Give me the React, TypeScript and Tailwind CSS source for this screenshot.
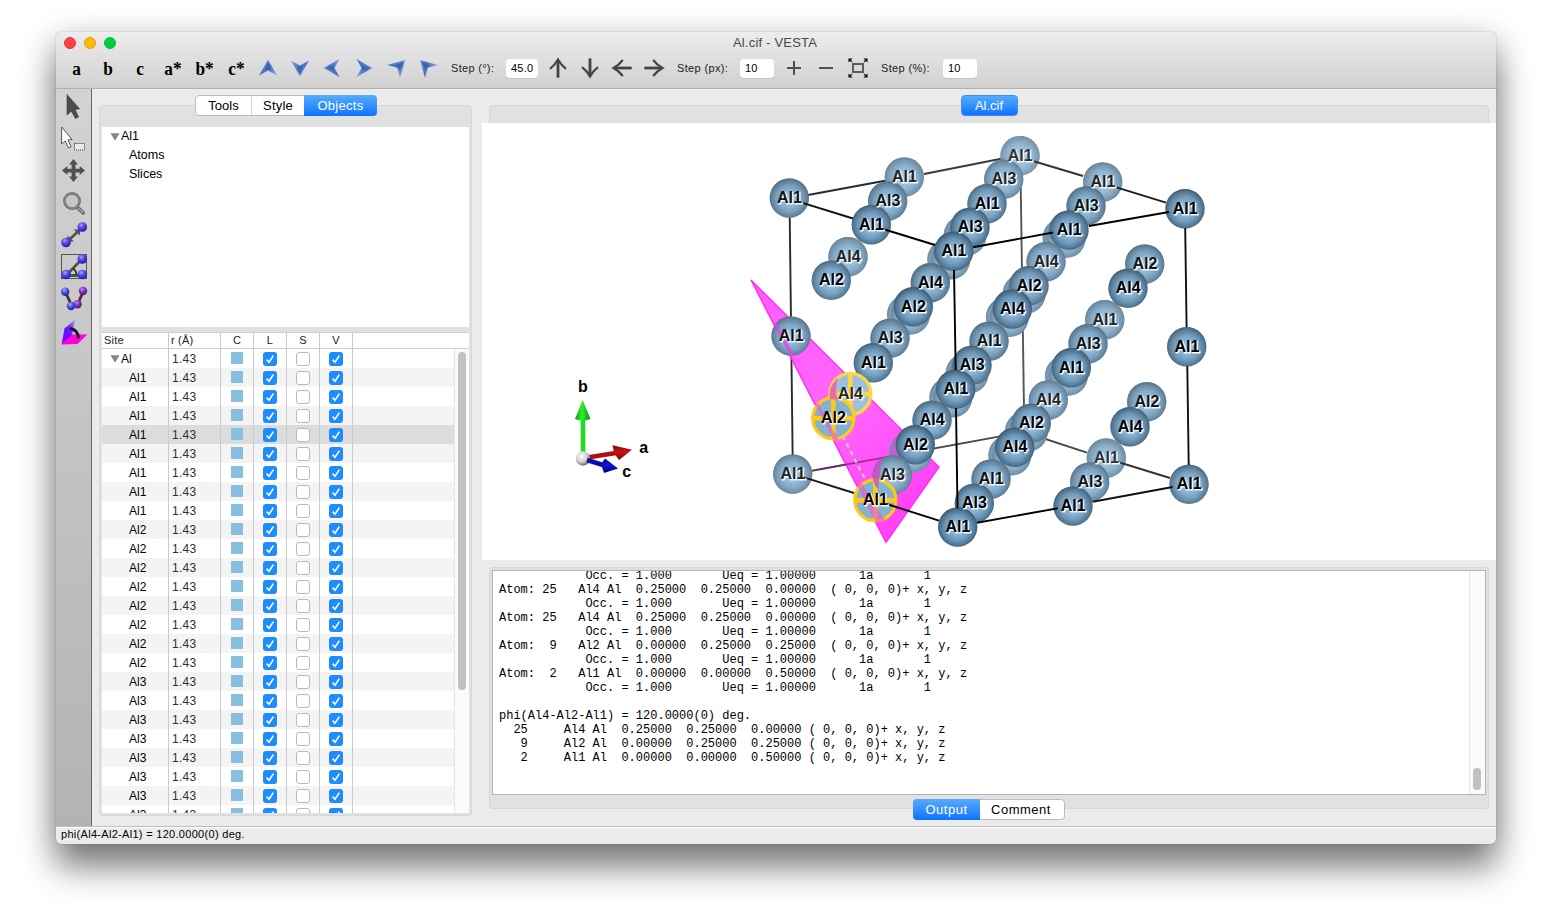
import React from "react";

const SANS = "font-['Liberation_Sans',Arial,sans-serif]";

type Atom = { x: number; y: number; label: string; fog: number; selected?: boolean };

const hiddenAtoms: [number, number][] = [
  [970, 227.3], [953.7, 251.3], [913.3, 306.7], [1069, 230], [1029, 285.7], [1012.3, 309],
  [972, 365.3], [955.7, 389.3], [915.3, 444.7], [1071.3, 367.7], [1031.3, 423.3], [1014.7, 447.3],
];

const atoms: Atom[] = [
  { x: 1020, y: 155.7, label: "Al1", fog: 0.26 },
  { x: 1003.7, y: 179.3, label: "Al3", fog: 0.18 },
  { x: 987, y: 203.7, label: "Al1", fog: 0.08 },
  { x: 970, y: 227.3, label: "Al3", fog: 0.03 },
  { x: 953.7, y: 251.3, label: "Al1", fog: 0 },
  { x: 904.3, y: 177, label: "Al1", fog: 0.2 },
  { x: 887.7, y: 201, label: "Al3", fog: 0.12 },
  { x: 871.3, y: 224.7, label: "Al1", fog: 0.04 },
  { x: 789.3, y: 198, label: "Al1", fog: 0.1 },
  { x: 848, y: 256.7, label: "Al4", fog: 0.2 },
  { x: 831.3, y: 280.3, label: "Al2", fog: 0.08 },
  { x: 1102.7, y: 182, label: "Al1", fog: 0.2 },
  { x: 1086, y: 206, label: "Al3", fog: 0.1 },
  { x: 1069, y: 230, label: "Al1", fog: 0.02 },
  { x: 1185, y: 208.7, label: "Al1", fog: 0.03 },
  { x: 1046, y: 261.7, label: "Al4", fog: 0.16 },
  { x: 1029, y: 285.7, label: "Al2", fog: 0.06 },
  { x: 1012.3, y: 309, label: "Al4", fog: 0 },
  { x: 930.3, y: 282.7, label: "Al4", fog: 0.08 },
  { x: 913.3, y: 306.7, label: "Al2", fog: 0 },
  { x: 1144.7, y: 264, label: "Al2", fog: 0.12 },
  { x: 1128, y: 288.3, label: "Al4", fog: 0.03 },
  { x: 890, y: 338.3, label: "Al3", fog: 0.12 },
  { x: 873.3, y: 362.7, label: "Al1", fog: 0.05 },
  { x: 791, y: 336, label: "Al1", fog: 0.12 },
  { x: 989, y: 341.3, label: "Al1", fog: 0.1 },
  { x: 972, y: 365.3, label: "Al3", fog: 0.04 },
  { x: 955.7, y: 389.3, label: "Al1", fog: 0 },
  { x: 1104.7, y: 319.7, label: "Al1", fog: 0.2 },
  { x: 1088, y: 343.7, label: "Al3", fog: 0.12 },
  { x: 1071.3, y: 367.7, label: "Al1", fog: 0.02 },
  { x: 1186.7, y: 346.7, label: "Al1", fog: 0.05 },
  { x: 1048.3, y: 400, label: "Al4", fog: 0.18 },
  { x: 1031.3, y: 423.3, label: "Al2", fog: 0.08 },
  { x: 1014.7, y: 447.3, label: "Al4", fog: 0 },
  { x: 932, y: 420.3, label: "Al4", fog: 0.08 },
  { x: 915.3, y: 444.7, label: "Al2", fog: 0 },
  { x: 1146.7, y: 401.7, label: "Al2", fog: 0.13 },
  { x: 1130, y: 426.7, label: "Al4", fog: 0.04 },
  { x: 850.3, y: 394, label: "Al4", fog: 0.2, selected: true },
  { x: 833.3, y: 418.3, label: "Al2", fog: 0.05, selected: true },
  { x: 792.7, y: 474, label: "Al1", fog: 0.18 },
  { x: 892.3, y: 475, label: "Al3", fog: 0.15 },
  { x: 875.3, y: 500.3, label: "Al1", fog: 0, selected: true },
  { x: 991, y: 479, label: "Al1", fog: 0.12 },
  { x: 974.3, y: 503.3, label: "Al3", fog: 0.05 },
  { x: 957.7, y: 527, label: "Al1", fog: 0 },
  { x: 1106.3, y: 458, label: "Al1", fog: 0.22 },
  { x: 1089.7, y: 482, label: "Al3", fog: 0.14 },
  { x: 1073, y: 506, label: "Al1", fog: 0.04 },
  { x: 1189, y: 484.3, label: "Al1", fog: 0.08 },
];

const backEdges: [number, number, number, number, string][] = [
  [1020.5, 170, 1024, 410, "#555555"],
  [812, 470.7, 1024, 432, "#484848"],
  [1024, 432, 1087, 452.7, "#484848"],
  [808, 195, 889, 180, "#2a2a2a"],
  [924, 174, 1005, 158, "#3c3c3c"],
  [789.7, 215, 792.7, 460, "#2a2a2a"],
];

const frontEdges: [number, number, number, number, string][] = [
  [801.7, 202.7, 853, 218.5, "#111111"],
  [883, 229, 935, 245, "#000000"],
  [954, 270, 955.7, 370, "#000000"],
  [956, 408, 957.5, 508, "#000000"],
  [1033, 161, 1083, 176, "#333333"],
  [1114, 186.7, 1166, 202.7, "#1a1a1a"],
  [973, 247.3, 1053, 232.5, "#000000"],
  [1089, 226, 1169, 212, "#000000"],
  [1185.2, 228, 1186.6, 327, "#111111"],
  [1187.3, 366, 1188.7, 465, "#111111"],
  [1118, 462, 1170, 478, "#333333"],
  [977, 522.7, 1057.7, 508.3, "#000000"],
  [1092.7, 501.7, 1172.7, 487, "#111111"],
  [804, 477.3, 854, 493, "#1a1a1a"],
  [886.7, 504, 939, 520.7, "#000000"],
];

function AtomNode({ a }: { a: Atom }) {
  return (
    <g>
      {a.selected ? (
        <>
          <circle cx={a.x} cy={a.y} r={20.5} fill={a.fog > 0.1 ? "#9dc1dd" : "#86b2d2"} />
          <path
            d={`M${a.x - 21} ${a.y}H${a.x + 21}M${a.x} ${a.y - 21}V${a.y + 21}`}
            stroke={a.fog > 0.1 ? "#ffd63c" : "#ffca14"} strokeWidth={4.4} />
          <circle cx={a.x} cy={a.y} r={20.6} fill="none" stroke={a.fog > 0.1 ? "#ffd63c" : "#ffca14"} strokeWidth={3.2} />
        </>
      ) : (
        <>
          <circle cx={a.x} cy={a.y} r={19.7} fill="url(#atom)" />
          {a.fog > 0 && <circle cx={a.x} cy={a.y} r={19.8} fill="#cfe3f3" opacity={a.fog * 1.5} />}
        </>
      )}
    </g>
  );
}

function AtomLabel({ a }: { a: Atom }) {
  const c = a.fog > 0.2 ? "#333333" : a.fog >= 0.15 ? "#242424" : a.fog > 0.09 ? "#121212" : "#000000";
  return (
    <g fontFamily="'Liberation Sans', Arial, sans-serif" fontWeight={700} fontSize={16} textAnchor="middle">
      <text x={a.x + 1.2} y={a.y + 5.9} fill="#ffffff" stroke="#ffffff" strokeWidth={0.9} strokeOpacity={0.8}>{a.label}</text>
      <text x={a.x + 0.2} y={a.y + 4.9} fill={c}>{a.label}</text>
    </g>
  );
}

function Edge({ e }: { e: [number, number, number, number, string] }) {
  return <line x1={e[0]} y1={e[1]} x2={e[2]} y2={e[3]} stroke={e[4]} strokeWidth={1.9} />;
}

function Scene() {
  return (
    <svg className="block h-[437px] w-full" viewBox="482 123 1014 437">
      <defs>
        <radialGradient id="atom" cx="0.5" cy="0.52" r="0.5">
          <stop offset="0" stopColor="#a0ccee" />
          <stop offset="0.3" stopColor="#8bb7d9" />
          <stop offset="0.65" stopColor="#6c97b8" />
          <stop offset="0.88" stopColor="#4f7592" />
          <stop offset="1" stopColor="#405d74" />
        </radialGradient>
        <linearGradient id="plane" x1="0" y1="0" x2="0.5" y2="1">
          <stop offset="0" stopColor="#ff52fb" />
          <stop offset="0.6" stopColor="#ff5cfb" />
          <stop offset="1" stopColor="#ff38f8" />
        </linearGradient>
        <radialGradient id="ball" cx="0.4" cy="0.35" r="0.65">
          <stop offset="0" stopColor="#ffffff" />
          <stop offset="0.6" stopColor="#cfcfcf" />
          <stop offset="1" stopColor="#6a6a6a" />
        </radialGradient>
        <linearGradient id="axisG" x1="0" x2="1"><stop offset="0" stopColor="#0a9a0a" /><stop offset="0.45" stopColor="#30f030" /><stop offset="1" stopColor="#0a8f0a" /></linearGradient>
        <linearGradient id="axisR" x1="0" x2="0" y1="0" y2="1"><stop offset="0" stopColor="#7a0808" /><stop offset="0.45" stopColor="#d01212" /><stop offset="1" stopColor="#6f0505" /></linearGradient>
        <linearGradient id="axisB" x1="0" x2="0" y1="0" y2="1"><stop offset="0" stopColor="#000080" /><stop offset="0.45" stopColor="#1212e0" /><stop offset="1" stopColor="#000066" /></linearGradient>
        <clipPath id="leftBand">
          <path d="M751 280L886 542L893 530L874 505L842 445L828 422L785 338Z" />
        </clipPath>
      </defs>
      <rect x="482" y="123" width="1014" height="437" fill="#ffffff" />

      {/* Axis triad */}
      <path d="M583 458V418" stroke="#1fdc1f" strokeWidth="4.6" />
      <path d="M582.7 400L590.5 419Q582.7 422 575 419Z" fill="url(#axisG)" />
      <path d="M584 458L616 453" stroke="#b01010" strokeWidth="4.6" />
      <path d="M632 449.8L612.5 445.3L614 453L619 460Z" fill="url(#axisR)" />
      <circle cx="583" cy="458.5" r="7.2" fill="url(#ball)" />
      <path d="M587 460L603 465" stroke="#0c0cb0" strokeWidth="4.6" />
      <path d="M618 468.5L605 458.5L601 464L604 473Z" fill="url(#axisB)" />
      <g fontFamily="'Liberation Sans', Arial, sans-serif" fontWeight={700} fontSize={16} fill="#000000">
        <text x="578" y="392.2">b</text>
        <text x="639.2" y="452.5">a</text>
        <text x="622.2" y="477">c</text>
      </g>

      {backEdges.map((e, i) => <Edge key={i} e={e} />)}
      <path d="M751 280L939 467L886 542.5Z" fill="url(#plane)" fillOpacity="0.94" stroke="#ff2cf6" strokeWidth="1.4" />
      <path d="M820 469.2L900 454.6" stroke="#7d1c78" strokeWidth="1.6" opacity="0.7" />

      {hiddenAtoms.map(([x, y], i) => (
        <g key={i}>
          <circle cx={x - 6.7} cy={y + 8} r={19.7} fill="url(#atom)" />
          <circle cx={x - 6.7} cy={y + 8} r={19.8} fill="#cfe3f3" opacity={0.34} />
          <circle cx={x - 3} cy={y + 8.6} r={19.5} fill="url(#atom)" />
          <circle cx={x - 3} cy={y + 8.6} r={19.6} fill="#cfe3f3" opacity={0.3} />
        </g>
      ))}
      <path d="M896 437Q889 450 891 464Q896 474 908 472L900 450Z" fill="#c45ad0" />

      {atoms.map((a, i) => <AtomNode key={i} a={a} />)}

      {/* Parts of atoms that lie behind the dihedral plane */}
      <path d="M882.5 458.5A19.7 19.7 0 0 0 878 489Q880 472 882.5 458.5Z" fill="#c157c4" opacity="0.85" />
      <path d="M836 380A20 20 0 0 0 830 399L838 400Q834 390 838 378Z" fill="#e860b8" opacity="0.9" />
      <g clipPath="url(#leftBand)">
        <circle cx={791} cy={336} r={19.7} fill="#f03cf0" opacity="0.8" />
        <circle cx={833.3} cy={418.3} r={22} fill="#f050d8" opacity="0.6" />
        <circle cx={875.3} cy={500.3} r={22} fill="#f050d8" opacity="0.6" />
      </g>
      <path d="M842.7 436L865.5 480" stroke="#d4c4d4" strokeWidth="2.2" strokeDasharray="4.5 4" />

      {frontEdges.map((e, i) => <Edge key={i} e={e} />)}
      {atoms.map((a, i) => <AtomLabel key={i} a={a} />)}
    </svg>
  );
}

/* ---------- top toolbar ---------- */

function AxisButton({ label, cell }: { label: string; cell: string }) {
  return (
    <span className={`${cell} flex justify-center pt-[2px] font-['Liberation_Serif',serif] text-[18px] leading-[20px] font-bold text-black`}>
      <span className="inline-block scale-x-[0.96]">{label}</span>
    </span>
  );
}

function BlueArrow({ rot, dx = 0, dy = 0 }: { rot: number; dx?: number; dy?: number }) {
  return (
    <span className="flex w-8 justify-center">
      <svg width="26" height="26" viewBox="-13 -13 26 26">
        <defs>
          <linearGradient id={`ba${rot}`} x1="0" y1="0" x2="1" y2="1">
            <stop offset="0" stopColor="#b4cdf2" />
            <stop offset="0.5" stopColor="#4672c4" />
            <stop offset="1" stopColor="#7ea5e4" />
          </linearGradient>
        </defs>
        <g transform={`translate(${dx} ${dy}) rotate(${rot})`}>
          <path d="M0 -8.5L9 7.5L0 2.5L-9 7.5Z" fill={`url(#ba${rot})`} />
          <path d="M0 -7L2.8 2L0 2L-2.8 2Z" fill="#34599f" opacity="0.7" />
        </g>
      </svg>
    </span>
  );
}

function GrayArrow({ rot }: { rot: number }) {
  return (
    <span className="flex w-8 justify-center">
      <svg width="22" height="22" viewBox="-11 -11 22 22">
        <g transform={`rotate(${rot})`} fill="none" stroke="#444444">
          <path d="M0 9.7V-8" strokeWidth="2.8" />
          <path d="M-8 0.8Q-3 -3 0 -8.5Q3 -3 8 0.8" strokeWidth="2.2" />
        </g>
      </svg>
    </span>
  );
}

function Field({ value, cell }: { value: string; cell: string }) {
  return (
    <span className={`${cell} flex h-[19px] items-center rounded-[4px] bg-white pt-px pl-[5px] text-[11px] tracking-[0.2px] text-black shadow-[0_1px_0_#c4c4c4]`}>
      {value}
    </span>
  );
}

function TopBar() {
  return (
    <div className="flex h-[57px] flex-col rounded-t-[5px] border-b border-[#b1b1b1] bg-linear-to-b from-[#ededed] to-[#d1d1d1]">
      <div className="grid h-[22px] grid-cols-[1fr_auto_1fr] items-center pl-2">
        <div className="flex gap-2">
          <span className="size-3 rounded-full border border-[#e0383c] bg-[#fc4245]" />
          <span className="size-3 rounded-full border border-[#e0a000] bg-[#fdb900]" />
          <span className="size-3 rounded-full border border-[#0fb832] bg-[#00cd40]" />
        </div>
        <div className="pr-[10px] text-[13px] leading-[22px] tracking-[0.2px] text-[#4a4a4a]">Al.cif - VESTA</div>
        <div />
      </div>
      <div className="flex h-[28px] items-center pl-1">
        <AxisButton label="a" cell="w-[32px]" />
        <AxisButton label="b" cell="w-[32px]" />
        <AxisButton label="c" cell="w-[31px]" />
        <AxisButton label="a*" cell="w-[35px]" />
        <AxisButton label="b*" cell="w-[29px]" />
        <AxisButton label="c*" cell="w-[35px]" />
        <span className="-ml-[2px] flex">
          <BlueArrow rot={0} />
          <BlueArrow rot={180} />
          <BlueArrow rot={-90} />
          <BlueArrow rot={90} />
          <BlueArrow rot={45} dx={3} dy={-2} />
          <BlueArrow rot={-45} dx={-2} dy={-2} />
        </span>
        <span className="ml-[7px] w-[55px] text-[11px] tracking-[0.3px] whitespace-nowrap text-[#1c1c1c]">Step (°):</span>
        <Field value="45.0" cell="mr-1 w-8" />
        <GrayArrow rot={0} />
        <GrayArrow rot={180} />
        <GrayArrow rot={-90} />
        <GrayArrow rot={90} />
        <span className="ml-[7px] w-[63px] text-[11px] tracking-[0.35px] whitespace-nowrap text-[#1c1c1c]">Step (px):</span>
        <Field value="10" cell="mr-1 w-[34px]" />
        <span className="flex w-8 justify-center">
          <svg width="16" height="16" viewBox="0 0 16 16"><path d="M1 8H15M8 1V15" stroke="#505050" strokeWidth="2" /></svg>
        </span>
        <span className="flex w-8 justify-center">
          <svg width="16" height="16" viewBox="0 0 16 16"><path d="M1 8H15" stroke="#505050" strokeWidth="2" /></svg>
        </span>
        <span className="flex w-8 justify-center">
          <svg width="20" height="20" viewBox="0 0 20 20">
            <rect x="5" y="6" width="10" height="8" fill="none" stroke="#5c5c5c" strokeWidth="2" />
            <path d="M0.5 0.5H4.5L0.5 4.5ZM19.5 0.5V4.5L15.5 0.5ZM0.5 19.5V15.5L4.5 19.5ZM19.5 19.5H15.5L19.5 15.5Z" fill="#000000" />
            <path d="M1 1L4 4M19 1L16 4M1 19L4 16M19 19L16 16" stroke="#222222" strokeWidth="1.4" />
          </svg>
        </span>
        <span className="ml-[7px] w-[62px] text-[11px] tracking-[0.35px] whitespace-nowrap text-[#1c1c1c]">Step (%):</span>
        <Field value="10" cell="w-[34px]" />
      </div>
    </div>
  );
}

/* ---------- left tool strip ---------- */

function ToolStrip() {
  return (
    <div className="w-[36px] shrink-0 border-r border-[#666666] bg-linear-to-b from-[#d3d3d3] to-[#b3b3b3]">
      <svg className="block" width="35" height="262" viewBox="56 89 35 262">
        <defs>
          <radialGradient id="blue" cx="0.4" cy="0.3" r="0.7">
            <stop offset="0" stopColor="#a9a4ff" />
            <stop offset="0.45" stopColor="#5048ee" />
            <stop offset="1" stopColor="#2a16a8" />
          </radialGradient>
          <radialGradient id="azure" cx="0.4" cy="0.3" r="0.7">
            <stop offset="0" stopColor="#a8b4ff" />
            <stop offset="0.45" stopColor="#4a58e4" />
            <stop offset="1" stopColor="#1c2494" />
          </radialGradient>
          <radialGradient id="violet" cx="0.4" cy="0.3" r="0.7">
            <stop offset="0" stopColor="#c090ea" />
            <stop offset="0.5" stopColor="#7e34bc" />
            <stop offset="1" stopColor="#4c1478" />
          </radialGradient>
          <linearGradient id="fold" x1="0" y1="1" x2="1" y2="0">
            <stop offset="0" stopColor="#9a00ff" />
            <stop offset="0.5" stopColor="#5a10ff" />
            <stop offset="1" stopColor="#9f8cff" />
          </linearGradient>
        </defs>
        <path d="M67 94.5V115L71.3 111.2L75.5 118.6L78.6 117L75 109.5L79.6 108.8Z" fill="#4c4c4c" stroke="#3a3a3a" strokeWidth="0.6" />
        <path d="M61.6 127V144L65.2 141L68.6 148L71 146.8L68 140L72 139.4Z" fill="#ffffff" stroke="#444444" strokeWidth="0.9" />
        <rect x="74.5" y="143.5" width="10" height="6.5" fill="#e9e9e9" stroke="#333333" strokeDasharray="1 1" />
        <path d="M73.5 159L78 164.5H75.5V168.7H79.7V166L85 170.5L79.7 175V172.4H75.5V176.6H78L73.5 182L69 176.6H71.6V172.4H67.4V175L62 170.5L67.4 166V168.7H71.6V164.5H69Z" fill="#505050" />
        <path d="M78 208L83.2 212.8" stroke="#666666" strokeWidth="3.8" strokeLinecap="round" />
        <path d="M78 208L82.8 212.4" stroke="#a4a4a4" strokeWidth="1.5" strokeLinecap="round" />
        <circle cx="72" cy="201" r="7.6" fill="#c6c6c6" stroke="#6b6b6b" strokeWidth="2.6" />
        <circle cx="72" cy="201" r="7.4" fill="none" stroke="#9a9a9a" strokeWidth="0.8" />
        <path d="M70 239L78 231.5" stroke="#505050" strokeWidth="2.6" />
        <path d="M67.5 235.5V241.5H74ZM73.5 229.5H80V235.5Z" fill="#505050" />
        <circle cx="82.3" cy="227" r="4.8" fill="url(#blue)" />
        <circle cx="66" cy="242.5" r="4.8" fill="url(#blue)" />
        <rect x="61.5" y="254.5" width="25" height="24" fill="none" stroke="#555555" strokeWidth="1" />
        <path d="M66 275.5L82 259M66 275.5H82" stroke="#505050" strokeWidth="2.8" />
        <path d="M73 268.5Q77 271.5 76 275" fill="none" stroke="#333333" strokeWidth="1.8" />
        <circle cx="82.3" cy="259" r="4.8" fill="url(#blue)" />
        <circle cx="66" cy="274.5" r="4.8" fill="url(#blue)" />
        <circle cx="82.3" cy="274.5" r="4.8" fill="url(#blue)" />
        <path d="M65.5 292L71.3 305" stroke="#48342c" strokeWidth="2.8" />
        <path d="M83 292L77.8 304" stroke="#6c1a3c" strokeWidth="2.8" />
        <circle cx="65.2" cy="291.7" r="4.2" fill="url(#azure)" />
        <circle cx="83" cy="291" r="4.2" fill="url(#violet)" />
        <circle cx="77.5" cy="304.3" r="4.2" fill="url(#violet)" />
        <circle cx="71" cy="306" r="4.2" fill="url(#azure)" />
        <path d="M61.5 344.5L64.5 328.5L74.8 319.8L72 336Z" fill="url(#fold)" />
        <path d="M61.5 344.5L72 334.5L87.3 334.5L77.5 344Z" fill="#ff00d8" />
        <path d="M69.5 328.5Q78 329 78.5 338.5" fill="none" stroke="#26102e" strokeWidth="2.8" />
      </svg>
    </div>
  );
}

/* ---------- side panel ---------- */

const sites = [
  "Al", ...Array(8).fill("Al1"), ...Array(8).fill("Al2"), ...Array(8).fill("Al3"),
] as string[];

const COLS = "grid grid-cols-[67px_52px_33px_33px_33px_33px_1fr]";

function Check({ on }: { on: boolean }) {
  return on ? (
    <span className="flex size-[14px] items-center justify-center rounded-[3px] bg-[#1f8cfc]">
      <svg width="10" height="10" viewBox="0 0 10 10"><path d="M1.6 5.6L4 8.2L8.4 1.6" fill="none" stroke="#ffffff" strokeWidth="1.6" /></svg>
    </span>
  ) : (
    <span className="size-[14px] rounded-[3px] border border-[#b9b9b9] bg-white" />
  );
}

function Triangle() {
  return <svg width="10" height="8" viewBox="0 0 10 8"><path d="M0.5 0.3H9.5L5 7.7Z" fill="#868686" /></svg>;
}

function SiteRow({ name, i }: { name: string; i: number }) {
  const bg = i === 4 ? "bg-[#dcdcdc]" : i % 2 ? "bg-[#f4f4f4]" : "bg-white";
  const cell = "flex items-center justify-center border-r border-[#cbcbcb]";
  return (
    <div className={`${COLS} h-[19px] ${bg} shrink-0 text-[12px] leading-[18px]`}>
      {i === 0 ? (
        <div className="flex items-center gap-px border-r border-[#cbcbcb] pt-px pl-2 text-black"><Triangle />{name}</div>
      ) : (
        <div className="border-r border-[#cbcbcb] pt-px pl-[27px] text-black">{name}</div>
      )}
      <div className="border-r border-[#cbcbcb] pt-px pl-[3px] tracking-[0.3px] text-[#303030]">1.43</div>
      <div className={cell}><span className="mb-px size-3 bg-[#88bede]" /></div>
      <div className={cell}><Check on /></div>
      <div className={cell}><Check on={false} /></div>
      <div className={cell}><Check on /></div>
      <div />
    </div>
  );
}

function SidePanel() {
  return (
    <div className="flex w-[390px] shrink-0 flex-col pt-[6px] pl-[7px]">
      <div className="z-10 ml-[96px] flex h-[21px] w-[182px] self-start rounded-[4px] border border-[#bcbcbc] bg-white text-[13px] leading-[19px] text-black">
        <span className="w-[56px] border-r border-[#d5d5d5] text-center">Tools</span>
        <span className="w-[52px] text-center tracking-[0.2px]">Style</span>
        <span className="-my-px -mr-px flex-1 rounded-r-[4px] bg-linear-to-b from-[#55acfb] to-[#0a72fe] pt-px text-center tracking-[0.3px] text-white">Objects</span>
      </div>
      <div className="-mt-[11px] flex h-[711px] w-[373px] flex-col rounded-[4px] border border-[#d7d7d7] bg-[#e1e1e1] px-[2px] pt-[21px]">
        <div className="h-[200px] shrink-0 bg-white text-[12.5px] leading-[19px] text-black">
          <div className="flex items-center gap-px pl-2"><Triangle />Al1</div>
          <div className="pl-[27px]">Atoms</div>
          <div className="pl-[27px]">Slices</div>
        </div>
        <div className={`${COLS} mt-[5px] h-[17px] shrink-0 border-y border-[#cfcfcf] bg-white text-[11px] leading-[15px] tracking-[0.2px] text-[#222222]`}>
          <div className="border-r border-[#cbcbcb] pl-[2px]">Site</div>
          <div className="border-r border-[#cbcbcb] pl-[2px]">r (Å)</div>
          <div className="border-r border-[#cbcbcb] text-center">C</div>
          <div className="border-r border-[#cbcbcb] text-center">L</div>
          <div className="border-r border-[#cbcbcb] text-center">S</div>
          <div className="border-r border-[#cbcbcb] text-center">V</div>
          <div />
        </div>
        <div className="flex h-[464px] overflow-hidden bg-white">
          <div className="flex h-[464px] flex-1 flex-col overflow-hidden">
            {sites.map((s, i) => <SiteRow key={i} name={s} i={i} />)}
          </div>
          <div className="w-[15px] border-l border-[#e6e6e6] bg-[#fafafa] pt-[3px] pl-[3px]">
            <div className="h-[338px] w-2 rounded-full bg-[#c1c1c1]" />
          </div>
        </div>
      </div>
    </div>
  );
}

/* ---------- main area ---------- */

const output = `            Occ. = 1.000       Ueq = 1.00000      1a       1
Atom: 25   Al4 Al  0.25000  0.25000  0.00000  ( 0, 0, 0)+ x, y, z
            Occ. = 1.000       Ueq = 1.00000      1a       1
Atom: 25   Al4 Al  0.25000  0.25000  0.00000  ( 0, 0, 0)+ x, y, z
            Occ. = 1.000       Ueq = 1.00000      1a       1
Atom:  9   Al2 Al  0.00000  0.25000  0.25000  ( 0, 0, 0)+ x, y, z
            Occ. = 1.000       Ueq = 1.00000      1a       1
Atom:  2   Al1 Al  0.00000  0.00000  0.50000  ( 0, 0, 0)+ x, y, z
            Occ. = 1.000       Ueq = 1.00000      1a       1

phi(Al4-Al2-Al1) = 120.0000(0) deg.
  25     Al4 Al  0.25000  0.25000  0.00000 ( 0, 0, 0)+ x, y, z
   9     Al2 Al  0.00000  0.25000  0.25000 ( 0, 0, 0)+ x, y, z
   2     Al1 Al  0.00000  0.00000  0.50000 ( 0, 0, 0)+ x, y, z`;

function MainArea() {
  return (
    <div className="flex flex-1 flex-col">
      <div className="flex h-[34px] flex-col items-center px-[7px] pt-[6px]">
        <div className="z-10 h-[21px] w-[57px] rounded-[4px] border border-[#3d8df5] bg-linear-to-b from-[#55acfb] to-[#0a72fe] text-center text-[13px] leading-[19px] text-white">Al.cif</div>
        <div className="-mt-[11px] h-[18px] w-full rounded-t-[4px] border border-b-0 border-[#d7d7d7] bg-[#e1e1e1]" />
      </div>
      <Scene />
      <div className="flex flex-col items-center px-[7px] pt-[7px]">
        <div className="h-[242px] w-full rounded-[4px] border border-[#d7d7d7] bg-[#e1e1e1] px-[2px] pt-[2px]">
          <div className="flex h-[225px] overflow-hidden border border-[#b4b4b4] bg-white">
            <pre className="-mt-[2px] flex-1 pl-[6px] font-['Liberation_Mono',monospace] text-[12px] leading-[14px] text-black">{output}</pre>
            <div className="flex w-4 flex-col justify-end border-l border-[#e6e6e6] bg-[#fafafa] pb-[4px] pl-[3px]">
              <div className="h-[22px] w-2 rounded-full bg-[#c1c1c1]" />
            </div>
          </div>
        </div>
        <div className="z-10 -mt-[10px] flex h-[21px] w-[152px] rounded-[4px] border border-[#bcbcbc] bg-white text-[13px] leading-[19px] text-black">
          <span className="-my-px -ml-px w-[67px] rounded-l-[4px] bg-linear-to-b from-[#55acfb] to-[#0a72fe] pt-px text-center tracking-[0.5px] text-white">Output</span>
          <span className="flex-1 pr-[2px] text-center tracking-[0.5px]">Comment</span>
        </div>
      </div>
    </div>
  );
}

export default function App() {
  return (
    <div className={`${SANS} h-[924px] w-[1552px] overflow-hidden bg-white px-[56px] pt-[32px]`}>
      <div className="flex h-[812px] w-[1440px] flex-col rounded-[5px] bg-[#ebebeb] shadow-[0_0_1px_rgba(0,0,0,0.5),0_24px_34px_rgba(0,0,0,0.45),0_6px_34px_rgba(0,0,0,0.22)]">
        <TopBar />
        <div className="flex h-[737px]">
          <ToolStrip />
          <SidePanel />
          <MainArea />
        </div>
        <div className="h-[18px] border-t border-[#bdbdbd] pl-[5px] text-[11px] leading-[15px] tracking-[0.3px] text-black shadow-[inset_0_1px_0_#ffffff]">
          phi(Al4-Al2-Al1) = 120.0000(0) deg.
        </div>
      </div>
    </div>
  );
}
